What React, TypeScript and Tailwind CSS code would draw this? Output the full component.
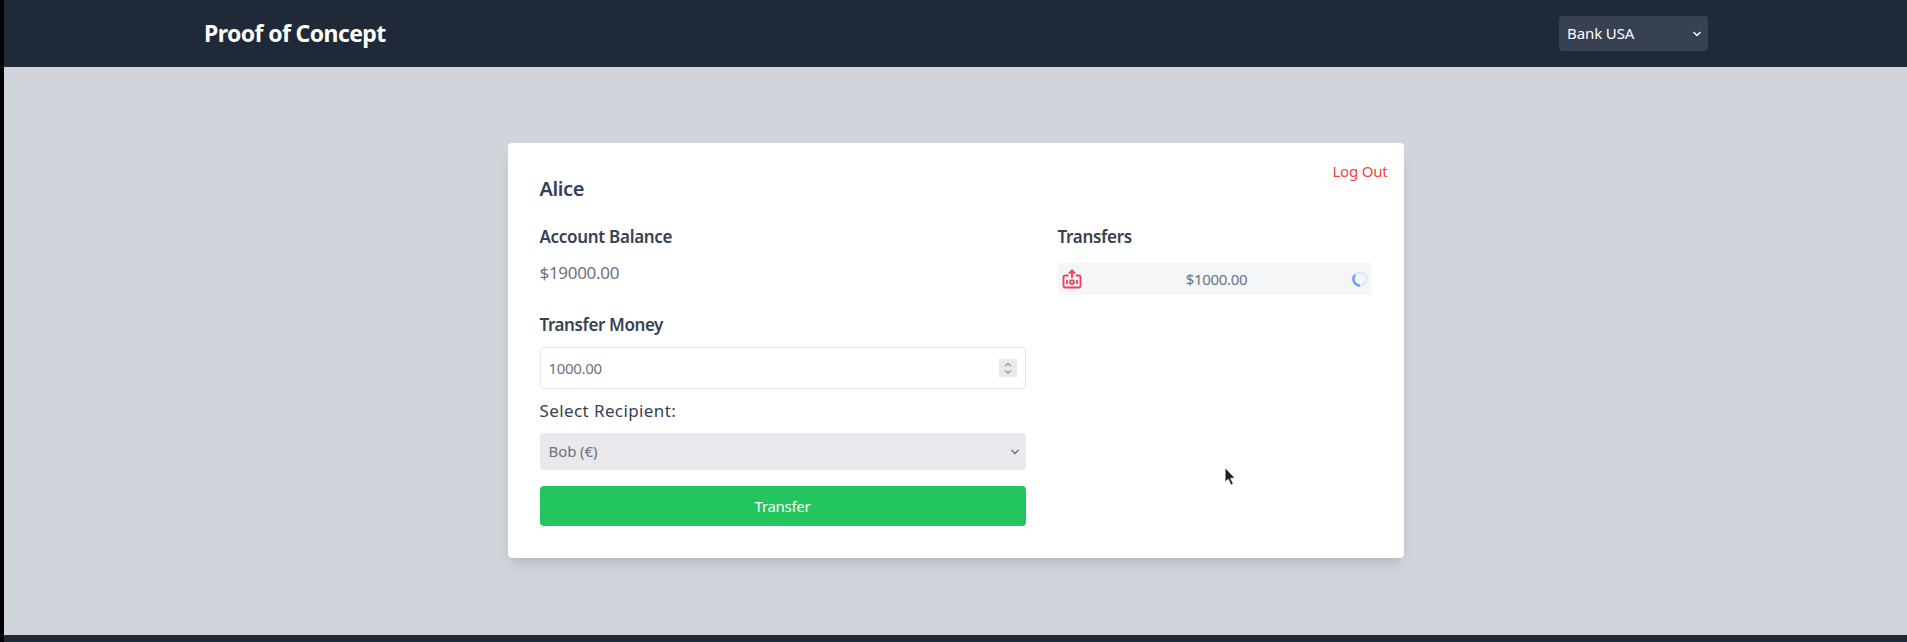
import React from 'react';

const font = { fontFamily: '"Noto Sans", sans-serif' };

const Chevron: React.FC<{ color: string }> = ({ color }) => (
    <svg className="absolute right-[6px] top-1/2 -translate-y-1/2 pointer-events-none" width="10" height="8" viewBox="0 0 10 8" fill="none" stroke={color} strokeWidth="1.4">
        <path d="M1.5 2 L5 5.5 L8.5 2" />
    </svg>
);

const WithdrawIcon: React.FC = () => (
    <svg width="20" height="20" viewBox="0 0 20 20" fill="none" stroke="#f43f5e" strokeWidth="1.9">
        <path d="M10 9 V1.5 M7 4.5 L10 1.5 L13 4.5" />
        <path d="M6.5 6.5 H3 A1.5 1.5 0 0 0 1.5 8 V17 A1.5 1.5 0 0 0 3 18.5 H17 A1.5 1.5 0 0 0 18.5 17 V8 A1.5 1.5 0 0 0 17 6.5 H13.5" />
        <circle cx="10" cy="13" r="1.9" />
        <path d="M5 11 V15 M15 11 V15" />
    </svg>
);

const Spinner: React.FC = () => (
    <svg width="16" height="16" viewBox="0 0 16 16" fill="none" strokeWidth="2.6">
        <circle cx="8" cy="8" r="6.5" stroke="#dbeafe" />
        <path d="M8 14.5 A6.5 6.5 0 0 1 3 3.8" stroke="#6ea3f5" />
    </svg>
);

const Navbar: React.FC = () => (
    <header className="h-[67px] bg-[#1f2937] flex items-center justify-between pl-[200px] pr-[199px]">
        <h1 className="text-[23px] font-bold text-white tracking-[-0.6px]">Proof of Concept</h1>
        <div className="relative">
            <select className="appearance-none block w-[149px] h-[35px] bg-[#374151] text-white text-[15px] leading-[33px] rounded pl-2 pb-[1px] tracking-[-0.1px]" defaultValue="usa">
                <option value="usa">Bank USA</option>
                <option value="eu">Bank EU</option>
            </select>
            <Chevron color="#ffffff" />
        </div>
    </header>
);

const TransferForm: React.FC = () => (
    <div className="flex flex-col">
        <h3 className="text-[17px] leading-[24px] font-semibold text-[#374151] tracking-[-0.3px]">Account Balance</h3>
        <p className="mt-3 text-[17px] leading-[24px] text-[#6b7280] tracking-[-0.3px]">$19000.00</p>
        <h3 className="mt-[28px] text-[17px] leading-[24px] font-semibold text-[#374151] tracking-[-0.4px]">Transfer Money</h3>
        <div className="mt-[10px] h-[42px] border border-[#e5e7eb] rounded flex items-center pl-2 pr-[8px]">
            <input className="flex-1 text-[15px] text-[#6b7280] outline-none tracking-[-0.3px]" defaultValue="1000.00" />
            <span className="w-[18px] h-[18px] bg-[#e8e8ed] flex items-center justify-center">
                <svg width="12" height="14" viewBox="0 0 12 14" fill="none" stroke="#8b8f9c" strokeWidth="1.2">
                    <path d="M3 5 L6 2.5 L9 5" />
                    <path d="M3 9.5 L6 12 L9 9.5" />
                </svg>
            </span>
        </div>
        <label className="mt-[10px] text-[17px] leading-[24px] text-[#374151] tracking-[0.4px]">Select Recipient:</label>
        <div className="relative mt-[10px]">
            <select disabled className="appearance-none block w-full h-[37px] bg-[#e8e8ed] text-[#6b7280] text-[15px] rounded pl-[9px] pb-[1px] opacity-100 tracking-[-0.1px]" defaultValue="bob">
                <option value="bob">Bob (€)</option>
            </select>
            <Chevron color="#6b7280" />
        </div>
        <button className="mt-4 h-10 bg-[#22c55e] text-white text-[15px] rounded tracking-[-0.3px]">Transfer</button>
    </div>
);

const Transfers: React.FC = () => (
    <div className="flex flex-col">
        <h3 className="text-[17px] leading-[24px] font-semibold text-[#374151] tracking-[-0.3px]">Transfers</h3>
        <div className="mt-[14px] h-8 bg-[#f5f6f8] flex items-center justify-between pl-1 pr-1">
            <WithdrawIcon />
            <span className="text-[15px] text-[#6b7280] tracking-[-0.3px]">$1000.00</span>
            <Spinner />
        </div>
    </div>
);

const App: React.FC = () => (
    <div className="h-[642px] flex bg-black overflow-hidden" style={font}>
        <div className="w-1 shrink-0" />
        <div className="flex-1 flex flex-col bg-[#d1d5db]">
            <Navbar />
            <main className="flex-1 flex justify-center pt-[76px]">
                <div className="relative w-[896px] h-[415px] bg-white rounded shadow-lg p-8">
                    <button className="absolute right-4 top-[17px] text-[15px] text-[#ef4444] tracking-[-0.2px]">Log Out</button>
                    <h2 className="text-[20px] leading-[26px] mt-[1px] font-semibold text-[#374151] tracking-[-0.4px]">Alice</h2>
                    <div className="mt-[23px] grid grid-cols-[486px_314px] gap-x-8">
                        <TransferForm />
                        <Transfers />
                    </div>
                    <svg className="absolute left-[716px] top-[325px]" width="13" height="19" viewBox="0 0 12 18">
                        <path d="M1 0 L1 13 L4 10.5 L6.5 16 L8.5 15 L6 9.8 L10 9.5 Z" fill="#1f1f1f" stroke="#fff" strokeWidth="0.5" />
                    </svg>
                </div>
            </main>
            <div className="h-[7px] bg-[#1f2937]" />
        </div>
    </div>
);

export default App;
